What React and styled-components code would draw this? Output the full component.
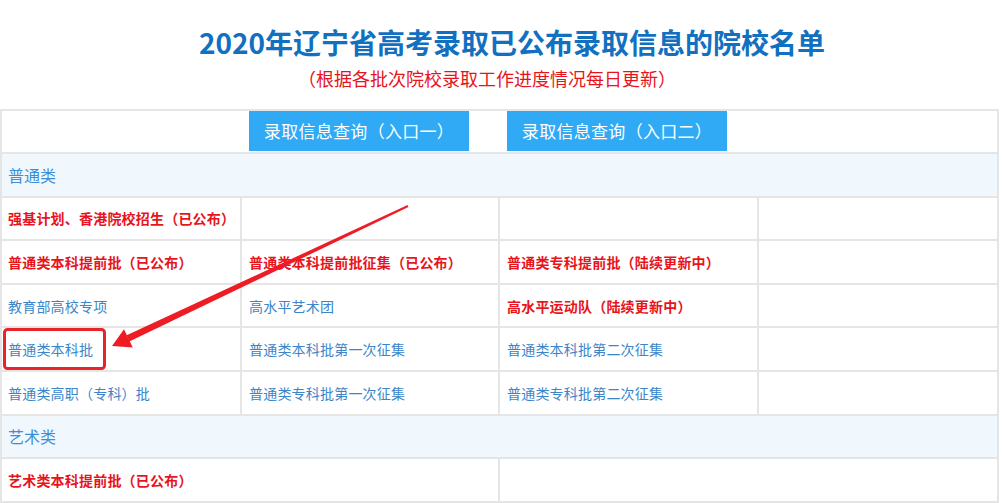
import styled, { createGlobalStyle } from "styled-components"

const GlobalStyle = createGlobalStyle`
  html, body {
    margin: 0;
    padding: 0;
    background: #fff;
  }
  body {
    font-family: "Noto Sans CJK SC", "Microsoft YaHei", sans-serif;
  }
`

const Page = styled.div`
  position: relative;
  width: 1002px;
  height: 503px;
  overflow: hidden;
`

const Header = styled.div`
  padding-top: 22px;
  text-align: center;
`

const Title = styled.h1`
  margin: 0;
  padding-left: 22px;
  font-size: 28px;
  line-height: 40px;
  font-weight: 700;
  color: #1170c0;
`

const Subtitle = styled.p`
  margin: 4px 0 19px;
  padding-right: 28px;
  font-size: 18px;
  line-height: 24px;
  color: #e8141c;
`

const Grid = styled.div`
  display: grid;
  grid-template-columns: 238px 256px 257px 238px;
  grid-template-rows: 41px;
  grid-auto-rows: 41.6px;
  gap: 2px;
  padding: 2px;
  width: 999px;
  box-sizing: border-box;
  background: #e5e5e5;
`

const ButtonRow = styled.div`
  grid-column: span 4;
  display: flex;
  align-items: flex-start;
  gap: 38px;
  padding-left: 247px;
  background: #fff;
`

const QueryButton = styled.a`
  display: block;
  width: 220px;
  height: 40px;
  line-height: 40px;
  text-align: center;
  font-size: 17px;
  letter-spacing: 0.3px;
  color: #fff;
  background: #30aaf5;
  cursor: pointer;
`

const Section = styled.div`
  grid-column: span 4;
  display: flex;
  align-items: center;
  padding-left: 6px;
  font-size: 16px;
  color: #3b8fd8;
  background: #f0f7fd;
`

const Cell = styled.div`
  grid-column: span ${(p) => p.$span || 1};
  display: flex;
  align-items: center;
  padding: 0 7px 0 ${(p) => (p.$first ? 6 : 7)}px;
  font-size: 14px;
  letter-spacing: 0.2px;
  white-space: nowrap;
  background: #fff;
  color: ${(p) => (p.$hot ? "#e8141c" : "#3b85c9")};
  font-weight: ${(p) => (p.$hot ? 700 : 400)};
`

const Overlay = styled.svg`
  position: absolute;
  top: 0;
  left: 0;
  pointer-events: none;
`

const rows = [
  [["强基计划、香港院校招生（已公布）", true], null, null, null],
  [
    ["普通类本科提前批（已公布）", true],
    ["普通类本科提前批征集（已公布）", true],
    ["普通类专科提前批（陆续更新中）", true],
    null,
  ],
  [["教育部高校专项"], ["高水平艺术团"], ["高水平运动队（陆续更新中）", true], null],
  [["普通类本科批"], ["普通类本科批第一次征集"], ["普通类本科批第二次征集"], null],
  [["普通类高职（专科）批"], ["普通类专科批第一次征集"], ["普通类专科批第二次征集"], null],
]

const Arrow = () => (
  <Overlay width="1002" height="503" viewBox="0 0 1002 503">
    <rect x="4.5" y="329.5" width="100" height="39" rx="3" fill="none" stroke="#e8232a" strokeWidth="3" />
    <polygon points="408.4,206.9 407.6,205.1 126.7,335.3 129.3,341.6" fill="#ee1c24" />
    <polygon points="112,346 124,329.3 128.3,338.3 132.8,347.5" fill="#ee1c24" />
  </Overlay>
)

const App = () => {
  return (
    <Page>
      <GlobalStyle />
      <Header>
        <Title>2020年辽宁省高考录取已公布录取信息的院校名单</Title>
        <Subtitle>（根据各批次院校录取工作进度情况每日更新）</Subtitle>
      </Header>
      <Grid>
        <ButtonRow>
          <QueryButton>录取信息查询（入口一）</QueryButton>
          <QueryButton>录取信息查询（入口二）</QueryButton>
        </ButtonRow>
        <Section>普通类</Section>
        {rows.map((row, i) =>
          row.map((c, j) => (
            <Cell key={i + "-" + j} $first={j === 0} $hot={c && c[1]}>
              {c ? c[0] : ""}
            </Cell>
          ))
        )}
        <Section>艺术类</Section>
        <Cell $span={2} $first $hot>
          艺术类本科提前批（已公布）
        </Cell>
        <Cell $span={2}></Cell>
      </Grid>
      <Arrow />
    </Page>
  )
}

export default App
